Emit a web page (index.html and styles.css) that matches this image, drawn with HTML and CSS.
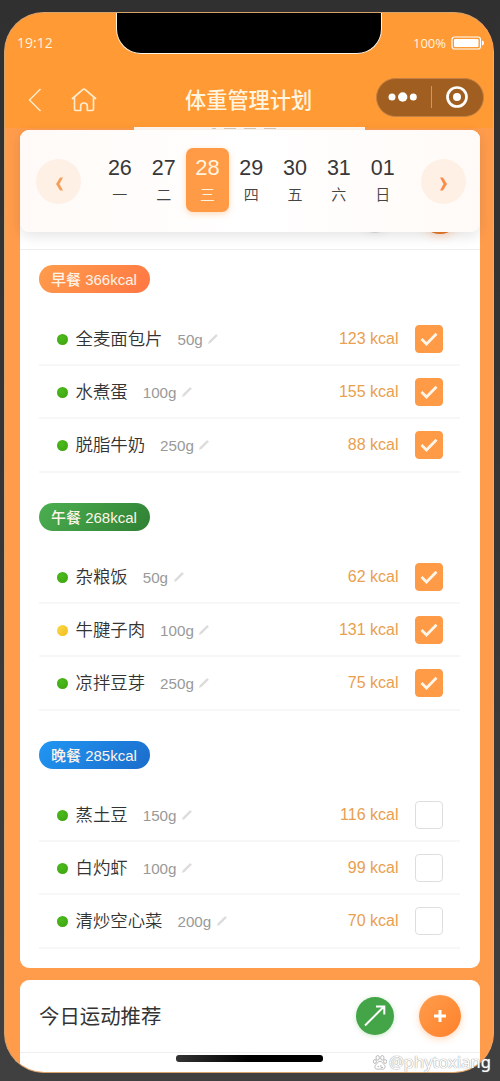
FILE: index.html
```html
<!DOCTYPE html>
<html lang="zh-CN">
<head>
<meta charset="utf-8">
<title>体重管理计划</title>
<link rel="stylesheet" href="styles.css">
</head>
<body>
<div class="phone">
  <div class="notch"></div>
  <header class="header">
    <div class="status">
      <span class="time">19:12</span>
      <span class="power">100%<svg width="34" height="14" viewBox="0 0 34 14"><rect x="1" y="1" width="28.5" height="12" rx="2.5" fill="none" stroke="#fff" stroke-width="1.2"/><rect x="3" y="3" width="24.5" height="8" rx="1" fill="#fff"/><path d="M31 4.5q2 .3 2 2.5t-2 2.5z" fill="#fff"/></svg></span>
    </div>
    <nav class="nav">
      <svg class="back" width="14" height="24" viewBox="0 0 14 24" fill="none" stroke="#ffe9c9" stroke-width="1.5"><path d="M12.5 1 1.5 12l11 11"/></svg>
      <svg class="home" width="26" height="24" viewBox="0 0 26 24" fill="none" stroke="#ffeacb" stroke-width="1.7" stroke-linecap="round" stroke-linejoin="round"><path d="M1.5 10.5 11.500 1.800q1.500-1.200 3 0l10 8.700M3.500 10v11q0 1.500 1.500 1.500h4.700V18q0-3 3.300-3t3.300 3v4.500h4.700q1.500 0 1.500-1.500V10"/></svg>
      <h1 class="title">体重管理计划</h1>
      <div class="capsule">
        <svg width="29" height="12" viewBox="0 0 29 12" fill="#fff"><circle cx="4" cy="6" r="3.500"/><circle cx="14.700" cy="6" r="4.700"/><circle cx="25.300" cy="6" r="3.500"/></svg>
        <i class="split"></i>
        <svg width="22" height="22" viewBox="0 0 22 22"><circle cx="11" cy="11" r="9.500" fill="none" stroke="#fff" stroke-width="2.700"/><circle cx="11" cy="11" r="4" fill="#fff"/></svg>
      </div>
    </nav>
    <div class="peek"><i></i><i></i><i></i><i></i></div>
  </header>
  <main class="content">
    <section class="card diet">
      <div class="under"><i class="shade gray"></i><i class="shade orange"></i></div>
      <div class="dates">
        <span class="arrow"><svg width="8" height="14" viewBox="0 0 8 14"><path d="M5 0.500h3L4.500 7 8 13.500H5L1 7z" fill="#f5a05a"/></svg></span>
        <div class="days">
          <div class="day"><b>26</b><small>一</small></div>
          <div class="day"><b>27</b><small>二</small></div>
          <div class="day active"><b>28</b><small>三</small></div>
          <div class="day"><b>29</b><small>四</small></div>
          <div class="day"><b>30</b><small>五</small></div>
          <div class="day"><b>31</b><small>六</small></div>
          <div class="day"><b>01</b><small>日</small></div>
        </div>
        <span class="arrow"><svg width="8" height="14" viewBox="0 0 8 14"><path d="M3 .5H0L3.500 7 0 13.500h3L7 7z" fill="#fb8d4b"/></svg></span>
      </div>
      <div class="meals" id="meals"></div>
    </section>
    <section class="card sport">
      <div class="sport-head">
        <h2>今日运动推荐</h2>
        <span class="round green"><svg width="22" height="22" viewBox="0 0 22 22" fill="none" stroke="#fff" stroke-width="2"><path d="M1 20.500 20 1.500M12 1.500h8.300v8"/></svg></span>
        <span class="round plus"><svg width="14" height="14" viewBox="0 0 14 14" stroke="#fff" stroke-width="3"><path d="M7 1v12M1 7h12"/></svg></span>
      </div>
    </section>
  </main>
  <div class="home-bar"></div>
</div>
<div class="mark"><svg width="14" height="15" viewBox="0 0 14 15"><g fill="#fff" stroke="#aaa" stroke-width=".8"><ellipse cx="4.700" cy="2.800" rx="1.700" ry="2.300"/><ellipse cx="9.300" cy="2.800" rx="1.700" ry="2.300"/><ellipse cx="1.900" cy="6.500" rx="1.500" ry="2"/><ellipse cx="12.100" cy="6.500" rx="1.500" ry="2"/><path d="M7 6.300c2 0 2.600 2 4 3.300 2.300 2.200.7 5-1.800 4.600-1.500-.3-2.900-.3-4.400 0C2.300 14.600.7 11.800 3 9.600 4.400 8.300 5 6.300 7 6.300z"/><path d="M4.500 11.500h1.500M8 10v2.500h2"/></g></svg><span>@phytoxiang</span></div>
<script src="meals.js"></script>
</body>
</html>
```
FILE: styles.css
```css
* { box-sizing: border-box; }
body {
  margin: 0;
  height: 1081px;
  overflow: hidden;
  position: relative;
  background: linear-gradient(#303030, #363636 50%, #404040);
  font-family: "Liberation Sans", "Noto Sans CJK SC", sans-serif;
  color: #333;
}
.phone {
  position: relative;
  width: 490px;
  height: 1061px;
  margin: 0 0 0 4px;
  top: 12px;
  overflow: hidden;
  border-radius: 40px;
  background: #ff9c4c;
  border: 1px solid #d8a46e;
  border-right-color: #ffa65e;
}
.notch {
  position: absolute;
  left: 111px;
  top: -1px;
  width: 266px;
  height: 42px;
  background: #000;
  border: 1.500px solid #fff3e2;
  border-top: 0;
  border-radius: 0 0 25px 25px;
}
.header {
  height: 117px;
  background: linear-gradient(#ff9a34 115px, #ff9c4c 115px);
  display: flex;
  flex-direction: column;
}
.status {
  height: 60px;
  padding: 0 8px 0 12px;
  display: flex;
  justify-content: space-between;
  align-items: center;
  color: #fff3de;
  font-family: "Open Sans", sans-serif;
  font-size: 14px;
}
.power { display: flex; align-items: center; gap: 5px; font-size: 13px; }
.time { margin-top: -2px; }
.nav { flex: 1; display: flex; align-items: center; padding: 0 9px 0 23px; }
.home { margin-left: 29px; }
.title { margin: 1px 0 0 88px; font-size: 21.200px; font-weight: 500; line-height: 30px; color: #fff5e0; white-space: nowrap; }
.capsule {
  margin: -6px 0 0 auto;
  width: 108px;
  height: 39px;
  border-radius: 20px;
  background: #a05f20;
  border: 1px solid #c38144;
  display: flex;
  align-items: center;
  padding: 0 15px 0 11px;
  justify-content: space-between;
}
.split { width: 1px; height: 22px; background: #c79a6b; }
.peek { width: 231px; height: 3px; margin-left: 129px; background: #fff8f0; display: flex; gap: 8px; padding: 1px 0 0 78px; }
.peek i { width: 12px; height: 1px; background: #d9c7b4; }
.peek i:first-child { width: 4px; }
.content { padding: 0 13.500px 0 15px; }
.card { background: #fff; border-radius: 9px; }
.diet { height: 838px; position: relative; }
.dates {
  position: relative;
  height: 102px;
  padding: 0 13px 0 16px;
  border-radius: 9px;
  background: linear-gradient(90deg, #fffaf7, #fff 50%, #fffaf7);
  box-shadow: 0 4px 14px rgba(0,0,0,.11);
  display: flex;
  align-items: center;
  justify-content: space-between;
}
.arrow {
  width: 45px;
  height: 45px;
  border-radius: 50%;
  background: #fff0e5;
  display: flex;
  align-items: center;
  justify-content: center;
  padding-top: 5px;
}
.days { display: flex; margin-top: -3px; }
.day {
  width: 43.800px;
  height: 64px;
  border-radius: 7px;
  display: flex;
  flex-direction: column;
  align-items: center;
  padding-top: 7px;
}
.day b { font-weight: 400; font-size: 21.500px; line-height: 27px; color: #383838; }
.day small { font-size: 15px; font-weight: 350; line-height: 22px; margin-top: 2px; color: #444; }
.day.active { background: #ff9a47; box-shadow: 0 2px 6px rgba(255,154,70,.35); }
.day.active b { color: #fff4df; font-size: 22px; margin-top: -1px; margin-bottom: 1px; }
.day.active small { color: #fff4df; }
.under { position: absolute; left: 0; right: 0; top: 80px; height: 40px; border-bottom: 1px solid #eee; }
.shade { position: absolute; top: -15px; width: 38px; height: 38px; border-radius: 50%; }
.gray { left: 336px; background: #ddd; box-shadow: 0 0 8px rgba(0,0,0,.08); }
.orange { left: 400px; top: -16px; width: 40px; height: 40px; background: #e9782a; box-shadow: 0 2px 8px rgba(255,140,60,.3); }
.meals { padding: 33px 20px 0 18.500px; }
.meal { height: 238px; }
.badge {
  display: flex;
  width: 111.500px;
  align-items: center;
  height: 28px;
  padding: 0 0 2px 12.500px;
  border-radius: 14px;
  font-size: 15px;
  font-weight: 500;
  color: #fff4e8;
  white-space: pre;
}
.breakfast { background: linear-gradient(135deg, #ff9d4c, #ff7643); }
.lunch { background: linear-gradient(135deg, #4caf50, #2f8034); }
.dinner { background: linear-gradient(135deg, #2196f3, #1b6ccb); }
.foods { margin-top: 20px; }
.food {
  height: 53.200px;
  border-bottom: 2px solid #f7f7f7;
  display: flex;
  align-items: center;
  padding: 1px 17px 0 18.500px;
}
.dot { width: 11px; height: 11px; border-radius: 50%; background: radial-gradient(circle at 40% 35%, #4bbb1b, #3da010); }
.dot.yellow { background: linear-gradient(135deg, #fadc4a, #f3bb1c); }
.name { margin-left: 7.500px; font-size: 17.400px; font-weight: 350; line-height: 26px; color: #333; }
.amount { margin-left: 15px; font-size: 15.200px; color: #999; }
.pen { margin-left: 5.500px; }
.kcal { margin-left: auto; font-size: 16px; color: #e9a050; }
.check {
  width: 28px;
  height: 28px;
  margin-left: 16px;
  border: 1.500px solid #dedede;
  border-radius: 4px;
  display: flex;
  align-items: center;
  justify-content: center;
}
.check.on { background: #ff9a47; border-color: #ff9a47; }
.sport { height: 110px; margin-top: 12px; }
.sport-head { height: 73px; border-bottom: 1px solid #eee; display: flex; align-items: center; padding: 0 18.500px 0 19px; }
.sport-head h2 { margin: 2px 0 0; font-size: 20.400px; font-weight: 400; line-height: 30px; }
.round { border-radius: 50%; display: flex; align-items: center; justify-content: center; }
.green { margin-left: auto; width: 38px; height: 38px; background: #43a548; box-shadow: 0 1px 5px rgba(76,175,80,.3); }
.plus { margin-left: 25px; width: 42px; height: 42px; background: linear-gradient(135deg, #ff9d4c, #ff812c); box-shadow: 0 2px 7px rgba(255,140,60,.35); }
.home-bar { position: absolute; left: 171px; bottom: 10px; width: 147px; height: 7px; border-radius: 3px; background: linear-gradient(90deg, #333, #000 50%); }
.mark {
  position: absolute;
  left: 373px;
  top: 1052px;
  display: flex;
  align-items: center;
  gap: 2px;
  font-family: "Noto Sans", sans-serif;
  font-size: 16.500px;
  line-height: 20px;
  color: #fff;
  text-shadow: 0 0 1px #999, 0 0 1px #999;
}
```
FILE: meals.js
```js
const meals = [
  ["breakfast", "早餐 366kcal", true, [["全麦面包片", "50g", 123], ["水煮蛋", "100g", 155], ["脱脂牛奶", "250g", 88]]],
  ["lunch", "午餐 268kcal", true, [["杂粮饭", "50g", 62], ["牛腱子肉", "100g", 131, "yellow"], ["凉拌豆芽", "250g", 75]]],
  ["dinner", "晚餐 285kcal", false, [["蒸土豆", "150g", 116], ["白灼虾", "100g", 99], ["清炒空心菜", "200g", 70]]]
];
const pen = '<svg class="pen" width="10" height="10" viewBox="0 0 10 10"><path d="M0 10 .8 7.200 7.400.8Q8-.1 9.200.9T9 2.600L2.500 9z" fill="#dcdcdc"/></svg>';
const tick = '<svg width="18" height="14" viewBox="0 0 18 14" fill="none" stroke="#fff6ea" stroke-width="2.800"><path d="M1.500 7 6.500 12 16.500 1.800"/></svg>';
document.getElementById("meals").innerHTML = meals.map(([kind, label, done, foods]) =>
  `<div class="meal"><div class="badge ${kind}">${label}</div><div class="foods">` +
  foods.map(([name, amount, kcal, tone]) =>
    `<div class="food"><i class="dot ${tone || ""}"></i><span class="name">${name}</span><span class="amount">${amount}</span>${pen}<span class="kcal">${kcal} kcal</span><span class="check ${done ? "on" : ""}">${done ? tick : ""}</span></div>`
  ).join("") + "</div></div>").join("");
```
